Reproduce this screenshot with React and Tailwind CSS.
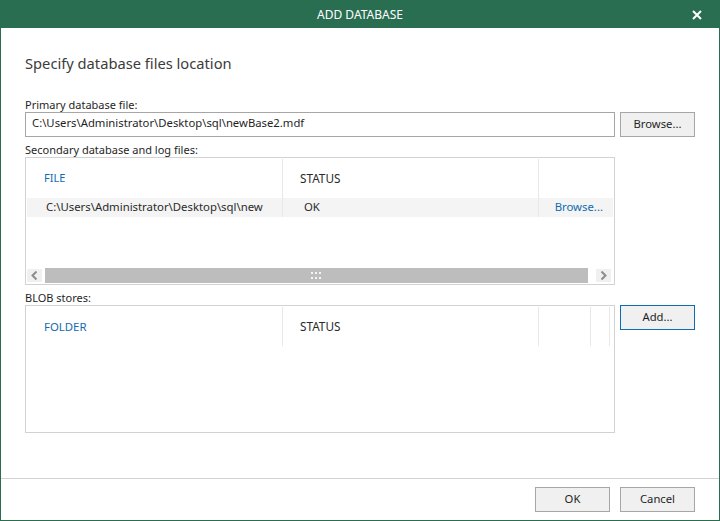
const font = { fontFamily: '"Noto Sans", "Open Sans", sans-serif' };

function Btn({ children, focused }) {
  return (
    <button className={`w-[75px] h-[25px] bg-[#f0f0f0] border text-[11.25px] text-[#1f1f1f] leading-none flex items-center justify-center pb-[1px] ${focused ? "border-[#0f6cb0]" : "border-[#a6a6a6]"}`}>
      {children}
    </button>
  );
}

function Cell({ w, children, className = "" }) {
  return <div className={`${w} shrink-0 h-full border-r border-[#e8e8e8] flex items-center ${className}`}>{children}</div>;
}

function Arrow({ right }) {
  return (
    <div className="w-[15px] h-[13px] bg-[#f0f0f0] flex items-center justify-center">
      <svg width="7" height="9" viewBox="0 0 7 9">
        <path d={right ? "M1.5 0.5 L5.5 4.5 L1.5 8.5" : "M5.5 0.5 L1.5 4.5 L5.5 8.5"} fill="none" stroke="#8c8c8c" strokeWidth="2" />
      </svg>
    </div>
  );
}

export default function App() {
  return (
    <div style={font} className="w-[720px] h-[521px] bg-white border border-[#2a6e52] flex flex-col overflow-hidden text-[11.25px] text-[#2b2b2b]">
      <div className="h-[27px] shrink-0 bg-[#2a6e52] text-white flex items-center pl-[27px] pr-[17px]">
        <div className="flex-1 text-center text-[12px]">ADD DATABASE</div>
        <svg width="10" height="10" viewBox="0 0 10 10">
          <path d="M1 1 L9 9 M9 1 L1 9" stroke="#fff" strokeWidth="2" />
        </svg>
      </div>

      <div className="flex-1 pl-6 flex flex-col">
        <div className="text-[14.7px] leading-[22px] mt-[24px] text-[#3c3c3c]">Specify database files location</div>

        <div className="h-[15px] leading-[15px] mt-[23px] text-[11px] text-[#1f1f1f]">Primary database file:</div>
        <div className="flex gap-[5px]">
          <div className="w-[590px] h-[25px] border border-[#a6a6a6] flex items-center pl-[6px] pb-[2px] text-[11.3px] text-[#1f1f1f]">C:\Users\Administrator\Desktop\sql\newBase2.mdf</div>
          <Btn>Browse...</Btn>
        </div>

        <div className="h-[14px] leading-[14px] mt-[6px] text-[11px] text-[#1f1f1f]">Secondary database and log files:</div>
        <div className="w-[590px] h-[128px] border border-[#d2d2d2] p-[1px] flex flex-col">
          <div className="h-[39px] flex shrink-0 text-[11.75px]">
            <Cell w="w-[256px]" className="pl-[17px] text-[11px] text-[#0f6cb0]">FILE</Cell>
            <Cell w="w-[256px]" className="pl-[17px]">STATUS</Cell>
          </div>
          <div className="h-[19px] bg-[#f4f4f4] flex shrink-0 text-[11.35px]">
            <Cell w="w-[256px]" className="pl-[19px] pb-[1px]">C:\Users\Administrator\Desktop\sql\new</Cell>
            <Cell w="w-[256px]" className="pl-[21px] pb-[1px]">OK</Cell>
            <div className="flex-1 flex items-center justify-end pr-[10px] pb-[1px] text-[#0f6cb0]">Browse...</div>
          </div>
          <div className="flex-1"></div>
          <div className="h-[15px] flex items-center shrink-0 pr-[2px]">
            <Arrow />
            <div className="w-[3px]"></div>
            <div className="w-[543px] h-[15px] bg-[#bdbdbd] flex items-center justify-center">
              <svg width="11" height="8" viewBox="0 0 11 8" fill="#f5f5f5">
                <rect x="0" y="0" width="2" height="2" /><rect x="4" y="0" width="2" height="2" /><rect x="8" y="0" width="2" height="2" />
                <rect x="0" y="5" width="2" height="2" /><rect x="4" y="5" width="2" height="2" /><rect x="8" y="5" width="2" height="2" />
              </svg>
            </div>
            <div className="flex-1"></div>
            <Arrow right />
          </div>
        </div>

        <div className="h-[14px] leading-[14px] mt-[6px] text-[11px] text-[#1f1f1f]">BLOB stores:</div>
        <div className="flex gap-[5px]">
          <div className="w-[590px] h-[128px] border border-[#d2d2d2] p-[1px]">
            <div className="h-[39px] flex text-[11.75px]">
              <Cell w="w-[256px]" className="pl-[17px] text-[11.4px] text-[#0f6cb0]">FOLDER</Cell>
              <Cell w="w-[256px]" className="pl-[17px]">STATUS</Cell>
              <Cell w="w-[52px]"></Cell>
              <Cell w="w-[19px]"></Cell>
            </div>
          </div>
          <Btn focused>Add...</Btn>
        </div>

        <div className="flex-1"></div>
      </div>

      <div className="h-[42px] shrink-0 border-t border-[#d2d2d2] flex justify-end gap-[10px] pt-[8px] pr-[24px]">
        <Btn>OK</Btn>
        <Btn>Cancel</Btn>
      </div>
    </div>
  );
}
